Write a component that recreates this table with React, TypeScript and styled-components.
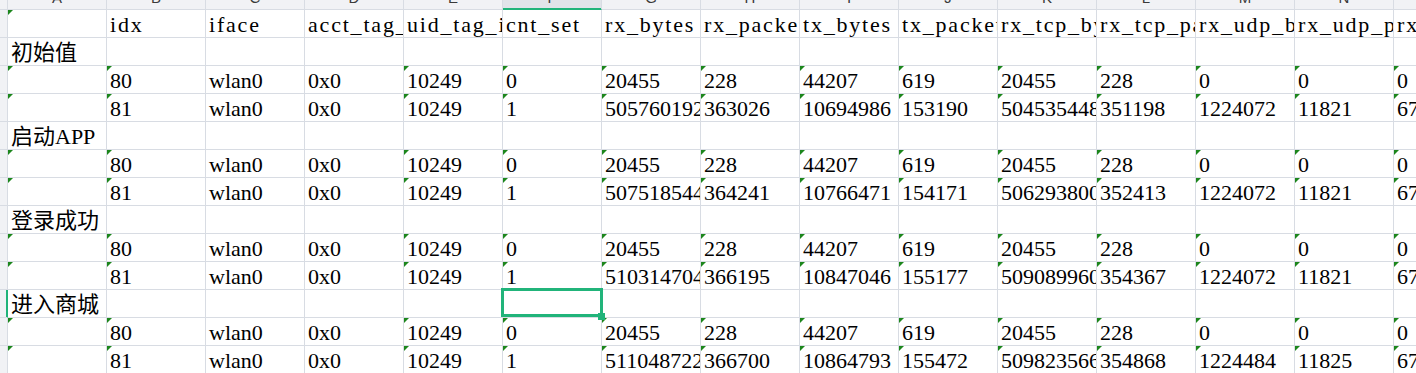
import styled, { createGlobalStyle } from 'styled-components';

const GRID = '#d8dce3';
const HEAD_BG = '#f1f2f5';
const GREEN = '#21b47a';

const COLS = 'ABCDEFGHIJKLMNO'.split('');
const SELECTED = { row: 10, col: 5 };

type Row = { cells: string[]; label?: boolean; flagRow?: boolean; header?: boolean };

const HEADERS = [
  '',
  'idx',
  'iface',
  'acct_tag_hex',
  'uid_tag_int',
  'cnt_set',
  'rx_bytes',
  'rx_packets',
  'tx_bytes',
  'tx_packets',
  'rx_tcp_bytes',
  'rx_tcp_packets',
  'rx_udp_bytes',
  'rx_udp_packets',
  'rx_other_bytes',
];

const FIRST = ['', '80', 'wlan0', '0x0', '10249', '0', '20455', '228', '44207', '619', '20455', '228', '0', '0', '0'];

const groups: { label: string; second: string[] }[] = [
  {
    label: '初始值',
    second: ['505760192', '363026', '10694986', '153190', '504535448', '351198', '1224072', '11821', '672'],
  },
  {
    label: '启动APP',
    second: ['507518544', '364241', '10766471', '154171', '506293800', '352413', '1224072', '11821', '672'],
  },
  {
    label: '登录成功',
    second: ['510314704', '366195', '10847046', '155177', '509089960', '354367', '1224072', '11821', '672'],
  },
  {
    label: '进入商城',
    second: ['511048722', '366700', '10864793', '155472', '509823566', '354868', '1224484', '11825', '672'],
  },
];

const rows: Row[] = [{ cells: HEADERS, header: true }];
groups.forEach(g => {
  rows.push({ cells: [g.label], label: true });
  rows.push({ cells: FIRST, flagRow: true });
  rows.push({ cells: ['', '81', 'wlan0', '0x0', '10249', '1', ...g.second], flagRow: true });
});

// text columns (iface, acct_tag) carry no "number stored as text" marker
const TEXT_COLS = [2, 3];

function hasFlag(rowIdx: number, colIdx: number, row: Row): boolean {
  if (row.header) return colIdx === 0;
  if (!row.flagRow) return false;
  return !TEXT_COLS.includes(colIdx);
}

const GlobalStyle = createGlobalStyle`
  html, body {
    margin: 0;
    padding: 0;
    overflow: hidden;
    background: #fff;
  }
`;

const Sheet = styled.div`
  display: grid;
  grid-template-columns: 8px repeat(15, 99px);
  grid-template-rows: 10px repeat(13, 28px);
  width: 1416px;
  height: 373px;
  overflow: hidden;
  font-family: 'Liberation Serif', 'Noto Sans CJK SC', serif;
  color: #000;
`;

const Corner = styled.div`
  box-sizing: border-box;
  background: ${HEAD_BG};
  border-right: 1px solid ${GRID};
  border-bottom: 1px solid ${GRID};
`;

const ColHeader = styled.div<{ $active?: boolean }>`
  box-sizing: border-box;
  display: flex;
  justify-content: center;
  align-items: flex-end;
  overflow: hidden;
  background: ${p => (p.$active ? '#e1e4e9' : HEAD_BG)};
  border-right: 1px solid ${GRID};
  border-bottom: 1px solid ${p => (p.$active ? GREEN : GRID)};
  box-shadow: ${p => (p.$active ? `inset 0 -1px 0 ${GREEN}` : 'none')};
  font-family: 'Liberation Sans', sans-serif;
  font-size: 15px;
  line-height: 15px;
  color: #3a3a3a;

  span {
    margin-bottom: 4px;
  }
`;

const RowHeader = styled.div<{ $active?: boolean }>`
  box-sizing: border-box;
  background: ${HEAD_BG};
  border-right: 1px solid ${p => (p.$active ? GREEN : GRID)};
  border-bottom: 1px solid ${GRID};
  box-shadow: ${p => (p.$active ? `inset -1px 0 0 ${GREEN}` : 'none')};
`;

const Cell = styled.div<{ $flag?: boolean; $selected?: boolean; $wide?: boolean }>`
  position: relative;
  box-sizing: border-box;
  display: flex;
  align-items: flex-end;
  padding: 0 3px;
  border-right: 1px solid ${GRID};
  border-bottom: 1px solid ${GRID};
  overflow: ${p => (p.$selected ? 'visible' : 'hidden')};
  white-space: nowrap;
  font-size: 22px;
  line-height: 24px;
  letter-spacing: ${p => (p.$wide ? '1.8px' : '0')};

  &::before {
    content: '';
    display: ${p => (p.$flag ? 'block' : 'none')};
    position: absolute;
    top: 0;
    left: 0;
    border-style: solid;
    border-width: 5px 5px 0 0;
    border-color: #1c861c transparent transparent transparent;
  }
`;

const Selection = styled.div`
  position: absolute;
  top: -2px;
  left: -2px;
  right: -2px;
  bottom: 0;
  border: 3px solid ${GREEN};
  z-index: 2;
`;

const FillHandle = styled.div`
  position: absolute;
  right: -5px;
  bottom: -6px;
  width: 7px;
  height: 7px;
  background: ${GREEN};
`;

export default function App() {
  return (
    <>
      <GlobalStyle />
      <Sheet>
        <Corner />
        {COLS.map((c, i) => (
          <ColHeader key={c} $active={i === SELECTED.col}>
            <span>{c}</span>
          </ColHeader>
        ))}
        {rows.map((row, r) => (
          <Row key={r} row={row} index={r} />
        ))}
      </Sheet>
    </>
  );
}

function Row({ row, index }: { row: Row; index: number }) {
  return (
    <>
      <RowHeader $active={index === SELECTED.row} />
      {COLS.map((_, c) => {
        const selected = index === SELECTED.row && c === SELECTED.col;
        return (
          <Cell
            key={c}
            $flag={hasFlag(index, c, row)}
            $selected={selected}
            $wide={row.header}
          >
            {row.cells[c] ?? ''}
            {selected && (
              <Selection>
                <FillHandle />
              </Selection>
            )}
          </Cell>
        );
      })}
    </>
  );
}
